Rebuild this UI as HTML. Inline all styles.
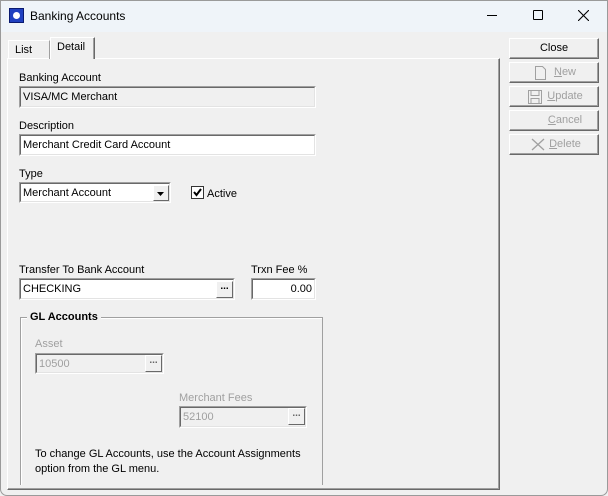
<!DOCTYPE html>
<html><head><style>
*{box-sizing:border-box;margin:0;padding:0}
body{width:608px;height:496px;background:#f0f0f0;font-family:"Liberation Sans",Arial,sans-serif;font-size:11px;color:#000;position:relative;overflow:hidden}
.a{position:absolute}
.win{left:0;top:0;width:608px;height:496px;border:1px solid #9a9a9a;border-radius:0 0 7px 7px;}
.title{left:1px;top:1px;width:606px;height:31px;background:#eff4f9}
.lbl{position:absolute;font-size:11px;white-space:nowrap}
.box{position:absolute;background:#fff;border:1px solid;border-color:#a0a0a0 #fff #fff #a0a0a0;}
.box>.in{position:absolute;left:0;top:0;right:0;bottom:0;border:1px solid;border-color:#696969 #e3e3e3 #e3e3e3 #696969;padding:2px 2px;font-size:11px;white-space:nowrap;line-height:14px}
.dots{position:absolute;width:17px;background:#f0f0f0;border:1px solid;border-color:#fff #696969 #696969 #fff;font-weight:bold;text-align:center;font-size:10px;line-height:10px}
.btn{position:absolute;left:509px;width:90px;height:21px;border:1px solid;border-color:#fff #696969 #696969 #fff;box-shadow:inset -1px -1px #a0a0a0;text-align:center;line-height:18px;font-size:11px;color:#a0a0a0}
.dis{color:#a0a0a0}
</style></head><body>
<div class="a win"></div>
<div class="a title"></div>
<div class="a" style="left:9px;top:8px;width:15px;height:15px;background:#2040c0;border:1px solid #0a1a70"><div class="a" style="left:3px;top:3px;width:7px;height:7px;border-radius:50%;background:#fff"></div></div>
<div class="lbl" style="left:30px;top:9px;font-size:12px">Banking Accounts</div>
<div class="a" style="left:487px;top:15px;width:10px;height:1px;background:#000"></div>
<div class="a" style="left:533px;top:10px;width:10px;height:10px;border:1px solid #000;border-radius:1px"></div>
<svg class="a" style="left:578px;top:10px" width="11" height="11"><path d="M0 0L11 11M11 0L0 11" stroke="#000" stroke-width="1.1"/></svg>

<!-- tab panel -->
<div class="a" style="left:7px;top:58px;width:493px;height:432px;border:1px solid;border-color:#fff #696969 #696969 #fff;box-shadow:inset -1px -1px #a0a0a0"></div>
<div class="a" style="left:8px;top:40px;width:42px;height:19px;border:1px solid;border-color:#fff #a0a0a0 transparent #fff;border-bottom:none"></div>
<div class="lbl" style="left:15px;top:44px">List</div>
<div class="a" style="left:50px;top:37px;width:45px;height:22px;background:#f0f0f0;border:1px solid;border-color:#fff #696969 transparent #fff;border-bottom:none;box-shadow:inset -1px 0 #a0a0a0"></div>
<div class="lbl" style="left:57px;top:41px">Detail</div>

<div class="lbl" style="left:19px;top:72px">Banking Account</div>
<div class="box" style="left:19px;top:86px;width:297px;height:22px;background:#f0f0f0"><div class="in">VISA/MC Merchant</div></div>
<div class="lbl" style="left:19px;top:120px">Description</div>
<div class="box" style="left:19px;top:134px;width:297px;height:22px"><div class="in">Merchant Credit Card Account</div></div>
<div class="lbl" style="left:19px;top:168px">Type</div>
<div class="box" style="left:19px;top:182px;width:152px;height:21px"><div class="in">Merchant Account</div>
<div class="dots" style="left:133px;top:2px;width:16px;height:16px;border-color:#fff #696969 #696969 #fff"><svg width="14" height="14"><path d="M3 6h7l-3.5 4z" fill="#000"/></svg></div></div>
<div class="a" style="left:191px;top:186px;width:13px;height:13px;background:#fff;border:1px solid #333"><svg class="a" style="left:1px;top:1px" width="9" height="9"><path d="M1 4l2.5 3L8 1" stroke="#000" stroke-width="2" fill="none"/></svg></div>
<div class="lbl" style="left:207px;top:188px">Active</div>

<div class="lbl" style="left:19px;top:264px">Transfer To Bank Account</div>
<div class="box" style="left:19px;top:278px;width:216px;height:22px"><div class="in">CHECKING</div>
<div class="dots" style="left:196px;top:2px;height:17px">...</div></div>
<div class="lbl" style="left:251px;top:264px">Trxn Fee %</div>
<div class="box" style="left:251px;top:278px;width:65px;height:22px"><div class="in" style="text-align:right">0.00</div></div>

<div class="a" style="left:20px;top:317px;width:303px;height:168px;border:1px solid;border-color:#a0a0a0 #a0a0a0 transparent #a0a0a0;border-bottom:none;box-shadow:1px 1px #fff inset"></div>
<div class="lbl" style="left:27px;top:311px;background:#f0f0f0;padding:0 3px;font-weight:bold">GL Accounts</div>
<div class="lbl dis" style="left:35px;top:338px">Asset</div>
<div class="box" style="left:35px;top:353px;width:129px;height:21px;background:#f0f0f0"><div class="in" style="color:#a0a0a0">10500</div></div>
<div class="dots" style="left:145px;top:355px;height:17px;color:#666">...</div>
<div class="lbl dis" style="left:179px;top:392px">Merchant Fees</div>
<div class="box" style="left:179px;top:406px;width:128px;height:22px;background:#f0f0f0"><div class="in" style="color:#a0a0a0">52100</div></div>
<div class="dots" style="left:288px;top:408px;height:17px;color:#666">...</div>
<div class="lbl" style="left:35px;top:448px">To change GL Accounts, use the Account Assignments</div>
<div class="lbl" style="left:35px;top:463px">option from the GL menu.</div>

<div class="btn" style="top:38px;color:#000">Close</div>
<div class="btn" style="top:62px"><svg class="a" style="left:25px;top:3px" width="12" height="14"><path d="M.5.5h7l3 3v10h-10z" fill="none" stroke="#a0a0a0"/></svg><span style="padding-left:22px"><u>N</u>ew</span></div>
<div class="btn" style="top:86px"><svg class="a" style="left:18px;top:3px" width="14" height="14"><path d="M.5.5h13v13h-13z M3 .5v5h8v-5 M3 13.5v-5h8v5" fill="none" stroke="#a0a0a0"/></svg><span style="padding-left:22px"><u>U</u>pdate</span></div>
<div class="btn" style="top:110px"><span style="padding-left:22px"><u>C</u>ancel</span></div>
<div class="btn" style="top:134px"><svg class="a" style="left:21px;top:3px" width="14" height="13"><path d="M1 1l12 11M13 1L1 12" stroke="#a0a0a0" stroke-width="1.3"/></svg><span style="padding-left:22px"><u>D</u>elete</span></div>
</body></html>
